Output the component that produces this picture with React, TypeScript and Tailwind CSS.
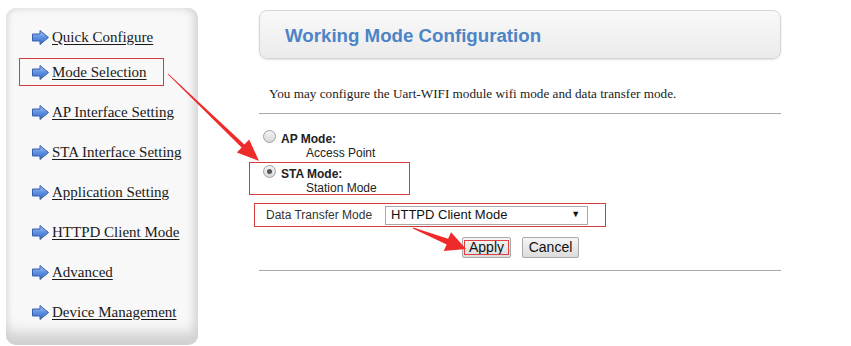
import React from "react";

const serif = { fontFamily: '"Liberation Serif", "Times New Roman", serif' };
const sans = { fontFamily: '"Liberation Sans", Arial, sans-serif' };

function BlueArrow() {
  return (
    <svg width="17" height="15" viewBox="0 0 17 15" className="shrink-0">
      <defs>
        <linearGradient id="ba" x1="0" y1="0" x2="0" y2="1">
          <stop offset="0" stopColor="#a9c6f5" />
          <stop offset="0.5" stopColor="#5f8fe0" />
          <stop offset="1" stopColor="#3e6cc4" />
        </linearGradient>
      </defs>
      <path
        d="M0.5 4 H8 V0.5 L16.5 7.5 L8 14.5 V11 H0.5 Z"
        fill="url(#ba)"
        stroke="#3a5fae"
        strokeWidth="1"
        strokeLinejoin="round"
      />
    </svg>
  );
}

const items = [
  "Quick Configure",
  "Mode Selection",
  "AP Interface Setting",
  "STA Interface Setting",
  "Application Setting",
  "HTTPD Client Mode",
  "Advanced",
  "Device Management",
];

function Radio({ checked }: { checked?: boolean }) {
  return (
    <span className="relative inline-block w-[13px] h-[13px] rounded-full border border-[#a0a0a0] bg-gradient-to-b from-[#f4f4f4] to-[#d8d8d8] shrink-0">
      {checked && (
        <span className="absolute left-[3px] top-[3px] w-[5px] h-[5px] rounded-full bg-[#555]" />
      )}
    </span>
  );
}

export default function App() {
  return (
    <div className="relative w-[851px] h-[346px] bg-white overflow-hidden">
      <div className="flex">
        {/* Sidebar */}
        <div
          className="ml-[6px] mt-[8px] w-[192px] h-[337px] rounded-[10px] bg-[#f8f8f8] shadow-[inset_-9px_0_8px_-5px_#d4d4d4,inset_0_-22px_14px_-10px_#cfcfcf,inset_7px_0_6px_-5px_#dedede,inset_0_8px_6px_-6px_#e4e4e4] pt-[19px]"
          style={serif}
        >
          {items.map((t, i) => (
            <div
              key={t}
              className={`relative flex items-center h-[20px] pl-[26px] ${i === 0 ? "" : i === 1 ? "mt-[15px]" : "mt-[20px]"}`}
            >
              {i === 1 && (
                <div className="absolute left-[13px] top-[-4px] w-[145px] h-[28px] border border-[#d23c3c]" />
              )}
              <BlueArrow />
              <span className="ml-[3px] text-[15px] text-[#1a1a1a] underline underline-offset-2 leading-none">
                {t}
              </span>
            </div>
          ))}
        </div>

        {/* Main */}
        <div className="ml-[61px] w-[522px] pt-[10px]">
          <div className="h-[49px] rounded-[8px] border border-[#d6d6d6] bg-gradient-to-b from-[#f9f9f9] to-[#ebebeb] shadow-[0_1px_2px_#e0e0e0] flex items-center pl-[25px] pt-[3px]">
            <span className="text-[18.7px] font-bold text-[#4d84c6]" style={sans}>
              Working Mode Configuration
            </span>
          </div>
          <div className="mt-[26px] pl-[10px] text-[13.2px] text-[#222] leading-[18px]" style={serif}>
            You may configure the Uart-WIFI module wifi mode and data transfer mode.
          </div>
          <div className="mt-[10px] h-px bg-[#a8a8a8]" />

          <div style={sans} className="text-[12px] text-[#222]">
            <div className="mt-[16px] flex pl-[4px]">
              <Radio />
              <div className="ml-[5px] mt-[2px]">
                <div className="font-bold leading-[14px]">AP Mode:</div>
                <div className="pl-[25px] leading-[14px]">Access Point</div>
              </div>
            </div>
            <div className="relative mt-[5px] flex pl-[4px]">
              <div className="absolute left-[-10px] top-[-3px] w-[161px] h-[33px] border border-[#d23c3c]" />
              <Radio checked />
              <div className="ml-[5px] mt-[2px]">
                <div className="font-bold leading-[14px]">STA Mode:</div>
                <div className="pl-[25px] leading-[14px]">Station Mode</div>
              </div>
            </div>

            <div className="relative mt-[8px] ml-[-5px] w-[352px] h-[24px] border border-[#d23c3c] flex items-center pl-[11px]">
              <span className="text-[12px] text-[#333]">Data Transfer Mode</span>
              <div className="ml-[13px] w-[203px] h-[19px] border border-[#a9a9a9] bg-white flex items-center justify-between pl-[5px] pr-[7px]">
                <span className="text-[13px] text-[#111]">HTTPD Client Mode</span>
                <span className="text-[9px] text-[#111]">▼</span>
              </div>
            </div>

            <div className="mt-[10px] flex pl-[203px] gap-[11px]">
              <div className="relative w-[49px] h-[21px] rounded-[2px] border border-[#a9a9a9] bg-gradient-to-b from-[#f6f6f6] to-[#dcdcdc] flex items-center justify-center text-[14px] text-[#111]">
                <div className="absolute left-[1px] top-[2px] right-[1px] bottom-[2px] border border-[#e04040]" />
                Apply
              </div>
              <div className="w-[57px] h-[21px] rounded-[2px] border border-[#a9a9a9] bg-gradient-to-b from-[#f6f6f6] to-[#dcdcdc] flex items-center justify-center text-[14px] text-[#111]">
                Cancel
              </div>
            </div>
          </div>
          <div className="mt-[12px] h-px bg-[#a8a8a8]" />
        </div>
      </div>

      {/* annotation arrows */}
      <svg className="absolute left-0 top-0 pointer-events-none" width="851" height="346">
        <polygon
          points="168.3,73.7 167.7,74.3 241.6,147.5 236.8,152.5 259,161 249.2,139.5 244.4,144.5"
          fill="#ee2a2a"
        />
        <polygon
          points="413.2,227.5 412.8,228.5 446.7,244.4 443.7,250.9 466,249 451.1,232.3 448.1,238.8"
          fill="#ee2a2a"
        />
      </svg>
    </div>
  );
}
